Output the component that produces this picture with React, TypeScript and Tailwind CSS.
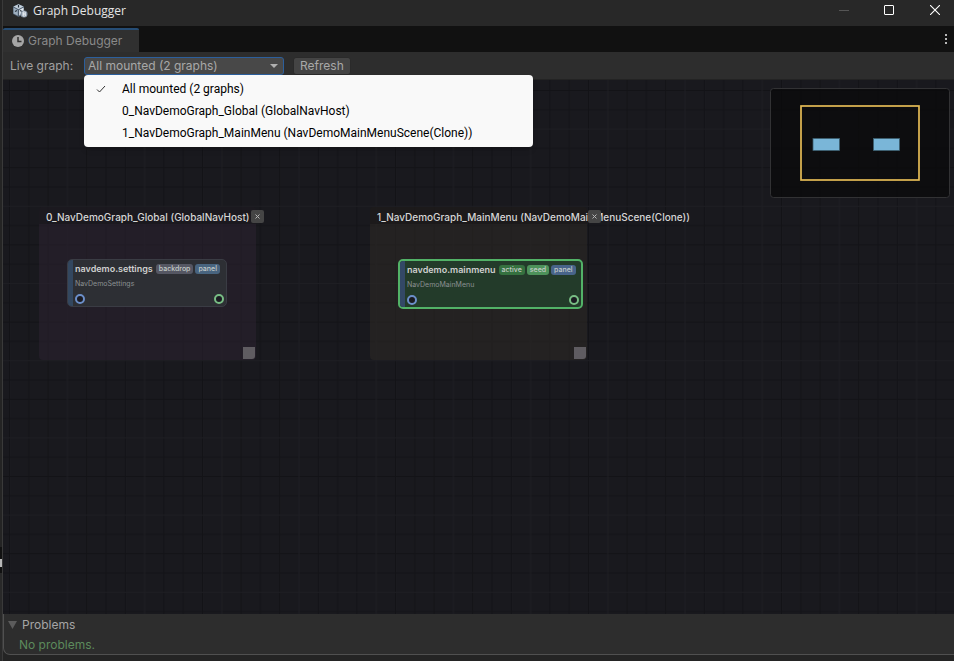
import { useState } from 'react'
import clsx from 'clsx'

const GRAPHS = [
  'All mounted (2 graphs)',
  '0_NavDemoGraph_Global (GlobalNavHost)',
  '1_NavDemoGraph_MainMenu (NavDemoMainMenuScene(Clone))',
]

type Tag = { label: string; className: string }

function UnityLogo() {
  return (
    <svg viewBox="0 0 16 16" className="h-4 w-4 shrink-0" aria-hidden="true">
      <path d="M6.500 1 12 3.500v7.500L6.500 14 1 11V3.500z" fill="#4b5a6b" />
      <path d="M6.500 1.200 11.500 3.600 6.500 6.300 1.500 3.600z" fill="#c3d0dc" />
      <path d="M1.500 4.600 5.800 7v5.800L1.500 10.500z" fill="#9fb0c0" />
      <path d="M7.200 7 11.600 4.600v4L7.200 12.800z" fill="#e3ebf2" />
      <path d="M6.500 2v2.500M3 8.500l2-1M10 8.500l-2-1" stroke="#27313c" strokeWidth="1.200" fill="none" />
      <circle cx="12" cy="11" r="3.500" fill="#8795a5" />
      <path d="M11 9v4M11 9h1.500a1 1 0 0 1 0 2H11h1.800a1 1 0 0 1 0 2H11" stroke="#eef3f8" strokeWidth="1" fill="none" />
    </svg>
  )
}

function ClockIcon() {
  return (
    <svg viewBox="0 0 12 12" className="h-3 w-3 shrink-0" aria-hidden="true">
      <circle cx="6" cy="6" r="6" fill="#a6a6a6" />
      <path d="M6 2v4.500h3.500" stroke="#303030" strokeWidth="1.500" fill="none" />
    </svg>
  )
}

function TitleBar() {
  return (
    <header className="flex h-[26px] items-start justify-between bg-[#282828]">
      <div className="flex items-center gap-[5px] pt-[1px] pl-[9px]">
        <UnityLogo />
        <h1 className="text-[12px] leading-5 text-[#e4e4e4]">Graph Debugger</h1>
      </div>
      <div className="flex h-5 text-white">
        <button type="button" aria-label="Minimize" disabled className="flex w-[45px] items-center justify-center text-[#555]">
          <svg viewBox="0 0 10 10" className="h-[10px] w-[10px]"><path d="M0 5.500h10" stroke="currentColor" /></svg>
        </button>
        <button type="button" aria-label="Maximize" className="flex w-[46px] items-center justify-center">
          <svg viewBox="0 0 10 10" className="h-[10px] w-[10px]"><rect x=".5" y=".5" width="9" height="9" rx=".5" fill="none" stroke="currentColor" /></svg>
        </button>
        <button type="button" aria-label="Close" className="flex w-[42px] items-center justify-end pr-[14px]">
          <svg viewBox="0 0 10 10" className="h-[10px] w-[10px]"><path d="M0 0l10 10M10 0L0 10" stroke="currentColor" strokeWidth="1.100" /></svg>
        </button>
      </div>
    </header>
  )
}

function TabStrip() {
  return (
    <div role="tablist" className="flex h-[26px] items-end justify-between bg-[#111]">
      <button type="button" role="tab" aria-selected="true"
        className="flex h-6 items-center gap-1 rounded-t-[2px] border-t-2 border-[#264d75] bg-[#303030] pr-[17px] pl-[9px] font-[Inter,sans-serif] text-[12px] text-[#8a8a8a]">
        <ClockIcon />
        Graph Debugger
      </button>
      <button type="button" aria-label="Tab options" className="flex h-[26px] w-4 items-center justify-center">
        <svg viewBox="0 0 2 10" className="h-[10px] w-[2px]" fill="#b8b8b8"><path d="M0 0h2v2H0zM0 4h2v2H0zM0 8h2v2H0z" /></svg>
      </button>
    </div>
  )
}

function GraphPicker() {
  const [selected, setSelected] = useState(0)
  const [open, setOpen] = useState(true)

  const pick = (index: number) => {
    setSelected(index)
    setOpen(false)
  }

  return (
    <div className="relative">
      <select id="live-graph" value={selected} onChange={e => pick(Number(e.target.value))}
        className="block h-[18px] w-[200px] appearance-none rounded-[3px] border border-[#2c5f9c] bg-[#484848] px-[3px] text-[12px] leading-4 text-[#a8a8a8] outline-none">
        {GRAPHS.map((name, i) => <option key={name} value={i}>{name}</option>)}
      </select>
      <svg viewBox="0 0 8 4" className="pointer-events-none absolute top-[7px] right-[6px] h-1 w-2" fill="#b0b0b0"><path d="M0 0h8L4 4z" /></svg>

      {open && (
        <ul role="listbox" aria-label="Live graph"
          className="absolute top-[18px] left-0 z-10 w-[449px] rounded-[4px] bg-[#f9f9f9] py-[3px] font-[Roboto,sans-serif] text-[12px] text-black shadow-md">
          {GRAPHS.map((name, i) => (
            <li key={name} role="option" aria-selected={i === selected}>
              <button type="button" onClick={() => pick(i)} className="flex h-[22px] w-full items-center hover:bg-[#ececec]">
                <span className="flex w-[38px] pl-3">
                  {i === selected && (
                    <svg viewBox="0 0 10 8" className="h-2 w-[10px]" fill="none" stroke="#333"><path d="M1 4.500 3.500 7 9 1" /></svg>
                  )}
                </span>
                {name}
              </button>
            </li>
          ))}
        </ul>
      )}
    </div>
  )
}

function Toolbar() {
  return (
    <div className="flex h-7 items-center border-b border-[#232323] bg-[#2d2d2d] pl-[7px] font-[Inter,sans-serif] text-[12px] text-[#a0a0a0]">
      <label htmlFor="live-graph" className="w-[74px]">Live graph:</label>
      <GraphPicker />
      <button type="button" className="ml-[9px] h-[18px] rounded-[3px] border border-[#2a2a2a] bg-[#444] px-[6px] leading-4 text-[#a8a8a8]">Refresh</button>
    </div>
  )
}

function Port({ className }: { className: string }) {
  return <span className={clsx('block h-[10px] w-[10px] rounded-full border-2 bg-[#1b1b22]', className)} />
}

type NodeProps = { name: string; type: string; tags: Tag[]; className: string; stripe: string; active?: boolean }

function GraphNode({ name, type, tags, className, stripe, active }: NodeProps) {
  return (
    <article className={clsx('absolute flex overflow-hidden rounded-[5px]', className,
      active ? 'border-2 border-[#52b267] bg-[#233b2a]' : 'border border-[#3a3c44] bg-[#2d2f34]')}>
      <div className={clsx('w-[5px] shrink-0', stripe)} />
      <div className="flex flex-1 flex-col pt-[3px] pr-[2px] pl-[2px]">
        <div className="flex h-3 items-center gap-[2px]">
          <h3 className="mr-[1px] text-[9px] leading-3 font-semibold text-[#cfcfcf]">{name}</h3>
          {tags.map(tag => (
            <span key={tag.label} className={clsx('h-[10px] rounded-[3px] px-[3px] text-[7px] leading-[10px] font-medium text-[#c4cbc8]', tag.className)}>{tag.label}</span>
          ))}
        </div>
        <p className="mt-1 text-[7px] leading-[10px] text-[#8b9092]">{type}</p>
        <div className="mt-[5px] flex justify-between">
          <Port className="border-[#6c8fca]" />
          <Port className="border-[#78bd84]" />
        </div>
      </div>
    </article>
  )
}

type GroupProps = { title: string; className: string; header: string; close: string; children: React.ReactNode }

function GraphGroup({ title, className, header, close, children }: GroupProps) {
  return (
    <section className={clsx('absolute top-[127px] h-[153px] w-[217px] rounded-[4px]', className)}>
      <h2 className={clsx('h-[17px] rounded-t-[4px] pl-[7px] text-[10px] leading-5 font-medium whitespace-nowrap text-[#d6d6d6]', header)}>{title}</h2>
      <button type="button" aria-label={`Close ${title}`}
        className={clsx('absolute top-[3px] flex h-[13px] w-[13px] items-center justify-center rounded-[2px] bg-[#454545] text-[#b5b5b5]', close)}>
        <svg viewBox="0 0 5 5" className="h-[5px] w-[5px]"><path d="M.5.5l4 4M4.500.5l-4 4" stroke="currentColor" /></svg>
      </button>
      {children}
      <span className="absolute right-[1px] bottom-[1px] h-3 w-3 rounded-br-[3px] bg-[#5f5c61]" />
    </section>
  )
}

function MiniMap() {
  return (
    <svg viewBox="0 0 180 110" className="absolute top-2 right-1 h-[110px] w-[180px]" aria-label="Mini map">
      <rect x=".5" y=".5" width="179" height="109" rx="3" fill="#0a0a0b" fillOpacity=".8" stroke="#323234" />
      <rect x="31" y="18" width="118" height="74" fill="none" stroke="#735f2e" strokeWidth="2" />
      <rect x="31" y="18" width="118" height="74" fill="none" stroke="#eec35a" strokeWidth="1.300" />
      <rect x="43" y="50.500" width="26.500" height="12" fill="#7ab6d8" stroke="#3c5f70" strokeWidth=".8" />
      <rect x="103.500" y="50.500" width="26" height="12" fill="#7ab6d8" stroke="#3c5f70" strokeWidth=".8" />
    </svg>
  )
}

function GraphCanvas() {
  return (
    <main className="relative flex-1 overflow-hidden bg-[#19191e] font-[Inter,sans-serif]">
      <svg className="absolute inset-0 h-full w-full" aria-hidden="true">
        <defs>
          <pattern id="grid" x="6" y="10" width="77.200" height="77.200" patternUnits="userSpaceOnUse">
            <path d="M.5 0v77.200M19.800 0v77.200M39.100 0v77.200M0 .5h77.200M0 19.800h77.200M0 58.400h77.200" stroke="#131317" />
            <path d="M58.400 0v77.200M0 39.100h77.200" stroke="#1e1e23" />
          </pattern>
        </defs>
        <rect width="100%" height="100%" fill="url(#grid)" />
      </svg>

      <GraphGroup title={GRAPHS[1]} className="left-[36px] bg-[#2a212e]/60" header="bg-[#161519]/60" close="-right-2">
        <GraphNode name="navdemo.settings" type="NavDemoSettings" stripe="bg-[#33475f]" className="top-[52px] left-[28px] h-12 w-[160px]"
          tags={[{ label: 'backdrop', className: 'bg-[#555763]' }, { label: 'panel', className: 'bg-[#48647f]' }]} />
      </GraphGroup>

      <GraphGroup title={GRAPHS[2]} className="left-[367px] bg-[#2c2824]/60" header="bg-[#171618]/60" close="-right-[14px]">
        <GraphNode active name="navdemo.mainmenu" type="NavDemoMainMenu" stripe="bg-[#334866]" className="top-[52px] left-[28px] h-[50px] w-[185px]"
          tags={[{ label: 'active', className: 'bg-[#35713f]' }, { label: 'seed', className: 'bg-[#4d925a]' }, { label: 'panel', className: 'bg-[#48648a]' }]} />
      </GraphGroup>

      <MiniMap />
    </main>
  )
}

function Problems() {
  return (
    <details open className="h-[41px] rounded-bl-[7px] border-b border-l border-[#505050] bg-[#2d2d2d] pl-1 font-[Inter,sans-serif] text-[12px] leading-5">
      <summary className="flex list-none items-center gap-[5px] pt-[1px] text-[#a5a5a5]">
        <svg viewBox="0 0 9 8" className="h-2 w-[9px]" fill="#5c5c5c"><path d="M0 0h9L4.500 8z" /></svg>
        Problems
      </summary>
      <p className="pl-[11px] text-[#5c8a5c]">No problems.</p>
    </details>
  )
}

export default function App() {
  return (
    <div className="flex h-screen bg-[#242424] font-['Open_Sans',sans-serif]">
      {/* edge of the editor window behind */}
      <div className="flex w-[3px] shrink-0 flex-col border-r border-[#3a3a3a] bg-[#292929]">
        <div className="h-[547px] bg-[#242424]" />
        <div className="h-3 bg-[#111]" />
        <div className="h-2 bg-[#b8b8b8]" />
        <div className="h-[6px] bg-[#111]" />
      </div>
      <div className="flex min-w-0 flex-1 flex-col pb-[6px]">
        <TitleBar />
        <TabStrip />
        <Toolbar />
        <GraphCanvas />
        <Problems />
      </div>
    </div>
  )
}
